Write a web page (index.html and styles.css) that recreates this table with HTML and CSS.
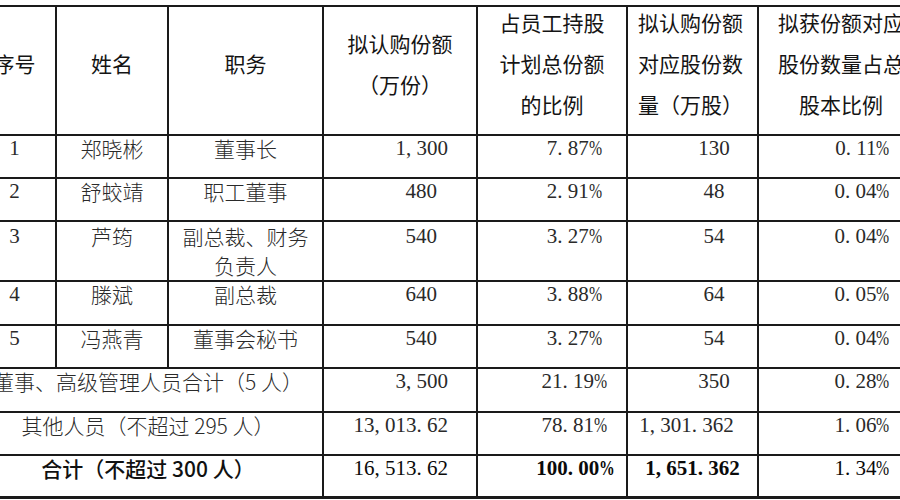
FILE: index.html
```html
<!DOCTYPE html>
<html lang="zh-CN">
<head>
<meta charset="utf-8">
<title>员工持股计划</title>
<link rel="stylesheet" href="styles.css">
</head>
<body>
<table class="t">
  <colgroup>
    <col class="c1"><col class="c2"><col class="c3"><col class="c4"><col class="c5"><col class="c6"><col class="c7">
  </colgroup>
  <thead>
    <tr class="rh">
      <th><div class="h">序号</div></th>
      <th><div class="h">姓名</div></th>
      <th><div class="h">职务</div></th>
      <th><div class="h">拟认购份额<br>（万份）</div></th>
      <th><div class="h">占员工持股<br>计划总份额<br>的比例</div></th>
      <th class="hl"><div class="h">拟认购份额<br>对应股份数<br>量（万股）</div></th>
      <th><div class="h">拟获份额对应<br>股份数量占总<br>股本比例</div></th>
    </tr>
  </thead>
  <tbody>
    <tr class="r43">
      <td class="num c">1</td><td class="cj">郑晓彬</td><td class="cj">董事长</td>
      <td class="num amt">1<span class="pt">,</span>300</td>
      <td class="num pct">7<span class="pt">.</span>87<span class="pc">%</span></td>
      <td class="num sh">130</td>
      <td class="num rt">0<span class="pt">.</span>11<span class="pc">%</span></td>
    </tr>
    <tr class="r43">
      <td class="num c">2</td><td class="cj">舒蛟靖</td><td class="cj">职工董事</td>
      <td class="num amt s">480</td>
      <td class="num pct">2<span class="pt">.</span>91<span class="pc">%</span></td>
      <td class="num sh">48</td>
      <td class="num rt">0<span class="pt">.</span>04<span class="pc">%</span></td>
    </tr>
    <tr class="r57 ml">
      <td class="num c">3</td><td class="cj">芦筠</td><td class="cj">副总裁、财务<br>负责人</td>
      <td class="num amt s">540</td>
      <td class="num pct">3<span class="pt">.</span>27<span class="pc">%</span></td>
      <td class="num sh">54</td>
      <td class="num rt">0<span class="pt">.</span>04<span class="pc">%</span></td>
    </tr>
    <tr class="r44">
      <td class="num c">4</td><td class="cj">滕斌</td><td class="cj">副总裁</td>
      <td class="num amt s">640</td>
      <td class="num pct">3<span class="pt">.</span>88<span class="pc">%</span></td>
      <td class="num sh">64</td>
      <td class="num rt">0<span class="pt">.</span>05<span class="pc">%</span></td>
    </tr>
    <tr class="r43">
      <td class="num c">5</td><td class="cj">冯燕青</td><td class="cj">董事会秘书</td>
      <td class="num amt s">540</td>
      <td class="num pct">3<span class="pt">.</span>27<span class="pc">%</span></td>
      <td class="num sh">54</td>
      <td class="num rt">0<span class="pt">.</span>04<span class="pc">%</span></td>
    </tr>
    <tr class="r44">
      <td class="cj" colspan="3">董事、高级管理人员合计（5 人）</td>
      <td class="num amt">3<span class="pt">,</span>500</td>
      <td class="num pct">21<span class="pt">.</span>19<span class="pc">%</span></td>
      <td class="num sh">350</td>
      <td class="num rt">0<span class="pt">.</span>28<span class="pc">%</span></td>
    </tr>
    <tr class="r43">
      <td class="cj" colspan="3">其他人员（不超过 295 人）</td>
      <td class="num amt">13<span class="pt">,</span>013<span class="pt">.</span>62</td>
      <td class="num pct">78<span class="pt">.</span>81<span class="pc">%</span></td>
      <td class="num sh w1">1<span class="pt">,</span>301<span class="pt">.</span>362</td>
      <td class="num rt">1<span class="pt">.</span>06<span class="pc">%</span></td>
    </tr>
    <tr class="r42 last">
      <td class="cj tot" colspan="3">合计（不超过 300 人）</td>
      <td class="num amt dk">16<span class="pt">,</span>513<span class="pt">.</span>62</td>
      <td class="num pct b">100<span class="pt">.</span>00<span class="pc">%</span></td>
      <td class="num sh w2 b">1<span class="pt">,</span>651<span class="pt">.</span>362</td>
      <td class="num rt dk">1<span class="pt">.</span>34<span class="pc">%</span></td>
    </tr>
  </tbody>
</table>
</body>
</html>
```

FILE: styles.css
```css
html, body {
  margin: 0;
  padding: 0;
  overflow: hidden;
  background: #ffffff;
}

body {
  font-family: "Noto Sans CJK SC", "Noto Sans", sans-serif;
  color: #222222;
}

.t {
  border-collapse: collapse;
  table-layout: fixed;
  width: 951px;
  margin: 5px 0 0 -28px;
}

.c1 { width: 83px; }
.c2 { width: 112px; }
.c3 { width: 155px; }
.c4 { width: 154px; }
.c5 { width: 150px; }
.c6 { width: 131px; }
.c7 { width: 166px; }

.t th,
.t td {
  border: 2px solid #1a1a1a;
  padding: 0;
}

.t th {
  font-weight: 400;
  font-size: 21px;
  line-height: 41px;
  vertical-align: middle;
  text-align: center;
  color: #141414;
  white-space: nowrap;
}

.h {
  margin-top: -14px;
}

.t th.hl {
  text-align: left;
  padding-left: 10px;
}

.rh { height: 129px; }
.r42 { height: 42px; }
.r43 { height: 43px; }
.r44 { height: 44px; }
.r57 { height: 57px; }

.t td {
  font-size: 21px;
  line-height: 24px;
  vertical-align: top;
  white-space: nowrap;
}

.t .ml td {
  line-height: 29px;
}

.last td {
  border-bottom-width: 3px;
}

.cj {
  text-align: center;
  font-weight: 300;
  color: #2a2a2a;
}

.cj.tot {
  font-weight: 500;
  color: #111111;
}

.num {
  font-family: "Liberation Serif", "DejaVu Serif", serif;
  color: #2a2a2a;
}

.c { text-align: center; }

.amt {
  text-align: right;
  padding-right: 28px !important;
}

.amt.s {
  padding-right: 39px !important;
}

.pct {
  text-align: center;
  padding-left: 44px !important;
}

.sh {
  text-align: center;
  padding-left: 43px !important;
}

.sh.w1 {
  padding-left: 0 !important;
  padding-right: 12px !important;
}

.sh.w2 {
  padding-left: 0 !important;
}

.rt {
  text-align: right;
  padding-right: 34px !important;
}

.pt {
  display: inline-block;
  width: 0.5em;
  text-align: left;
}

.pc {
  display: inline-block;
  width: 0.6em;
  transform: scaleX(0.75);
  transform-origin: left center;
}

.b {
  font-weight: 700;
  color: #0a0a0a;
}

.dk {
  color: #0a0a0a;
}
```
